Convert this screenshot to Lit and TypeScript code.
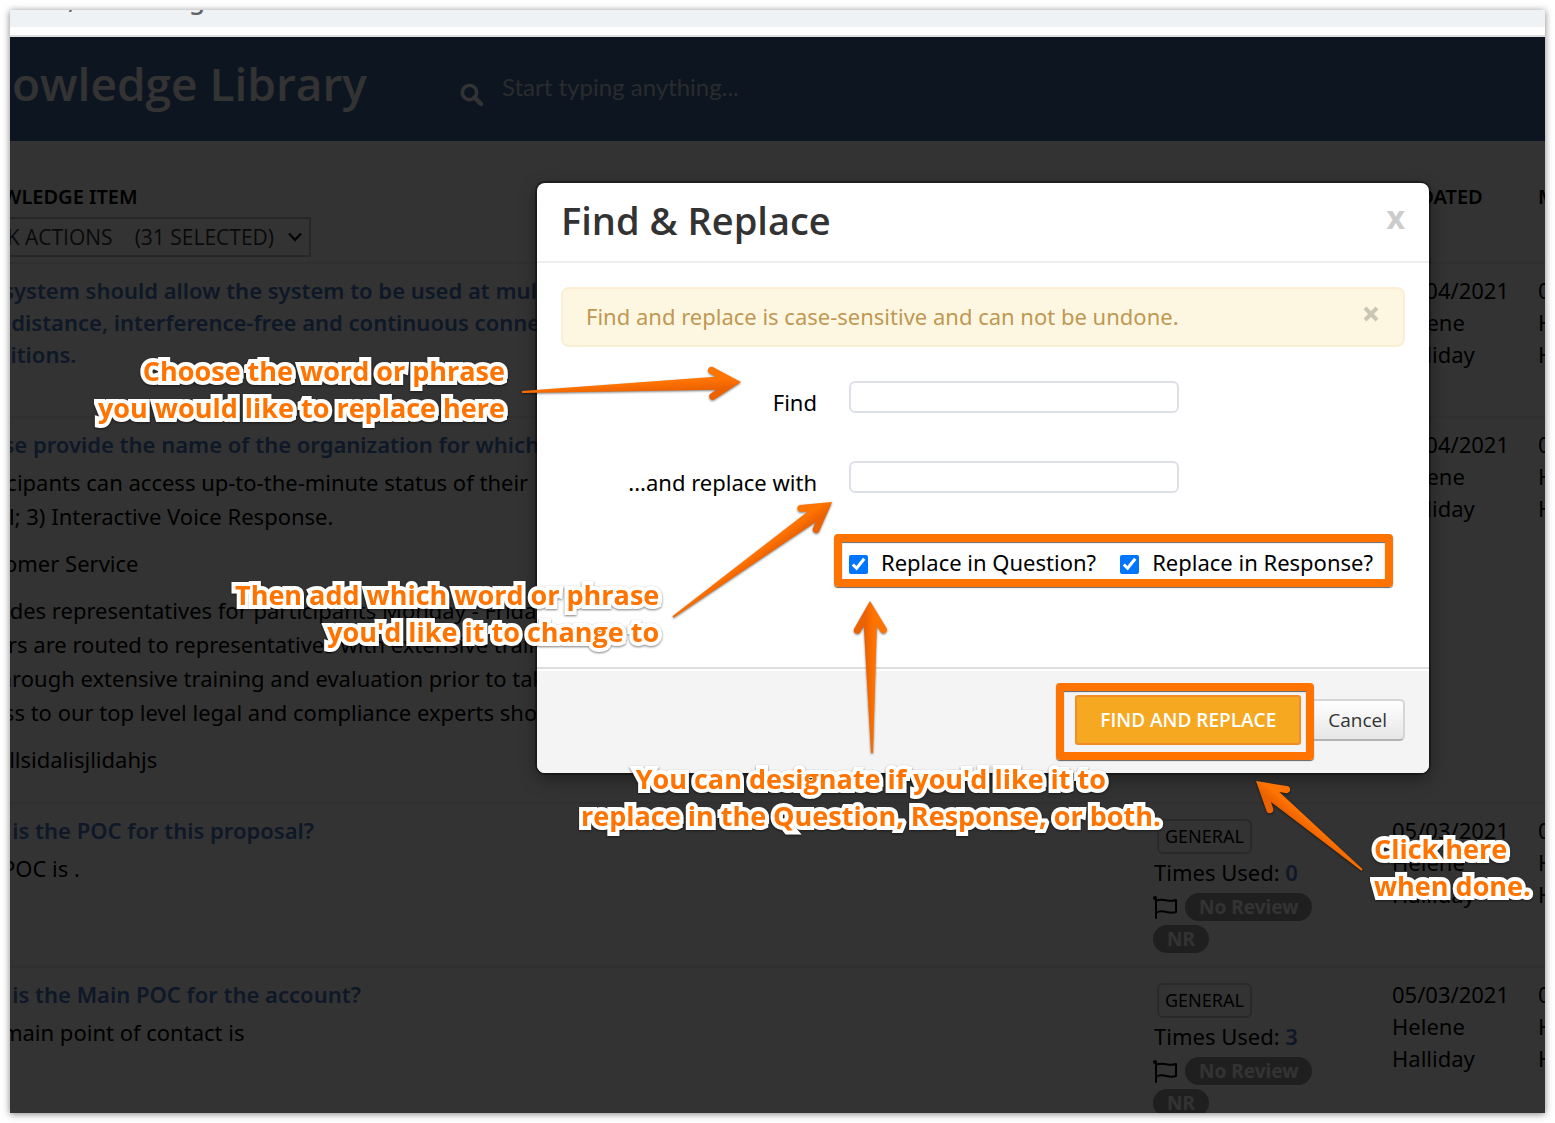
import { LitElement, css, html, svg, nothing } from "lit";
import { customElement, state } from "lit/decorators.js";

interface Item {
  size: string;
  title: string[];
  paragraphs: string[][];
  uses: number | null;
  date: string;
}

interface Arrow {
  tail: [number, number];
  tip: [number, number];
  shade: "left" | "right";
}

const ITEMS: Item[] = [
  {
    size: "short",
    title: [
      "The system should allow the system to be used at multiple",
      "long distance, interference-free and continuous connection",
      "conditions.",
    ],
    paragraphs: [],
    uses: null,
    date: "05/04/2021",
  },
  {
    size: "tall",
    title: ["Please provide the name of the organization for which"],
    paragraphs: [
      ["Participants can access up-to-the-minute status of their", "email; 3) Interactive Voice Response."],
      ["Customer Service"],
      [
        "Provides representatives for participants Monday - Friday",
        "Callers are routed to representatives with extensive training",
        "go through extensive training and evaluation prior to taking",
        "access to our top level legal and compliance experts should",
      ],
      ["rldsallsidalisjlidahjs"],
    ],
    uses: null,
    date: "05/04/2021",
  },
  {
    size: "medium",
    title: ["Who is the POC for this proposal?"],
    paragraphs: [["The POC is ."]],
    uses: 0,
    date: "05/03/2021",
  },
  {
    size: "medium",
    title: ["Who is the Main POC for the account?"],
    paragraphs: [["The main point of contact is"]],
    uses: 3,
    date: "05/03/2021",
  },
];

const ARROWS: Arrow[] = [
  { tail: [512, 382], tip: [731, 372], shade: "right" },
  { tail: [663, 607], tip: [822, 492], shade: "right" },
  { tail: [862, 743], tip: [860, 591], shade: "left" },
  { tail: [1352, 860], tip: [1246, 771], shade: "left" },
];

@customElement("library-page")
class LibraryPage extends LitElement {
  static styles = css`
    :host {
      display: block;
      color: #000;
      background: #fff;
      font: 22px/32px "Noto Sans", "Open Sans", sans-serif;
    }
    .strip {
      height: 17px;
      overflow: hidden;
      background: #eef2f4;
      color: #5f6368;
      display: flex;
      gap: 114px;
      padding-left: 58px;
      font-size: 26px;
      font-weight: 500;
      line-height: 1px;
      box-sizing: border-box;
    }
    .strip span {
      margin-top: -11px;
    }
    .toolbar {
      height: 8px;
      border-bottom: 2px solid #dcdee0;
    }
    .header {
      height: 104px;
      display: flex;
      align-items: center;
      background: #41699f;
      color: #fff;
    }
    .heading {
      margin: 0 0 12px -60px;
      width: 417px;
      box-sizing: border-box;
      display: flex;
      justify-content: flex-end;
      font-family: "Open Sans", "Noto Sans", sans-serif;
      font-size: 46px;
      line-height: 60px;
      font-weight: 600;
      white-space: nowrap;
    }
    .search {
      display: flex;
      align-items: center;
      gap: 19px;
      margin-left: 93px;
    }
    .search svg {
      margin-top: 10px;
    }
    .query {
      border: 0;
      padding: 0;
      width: 400px;
      margin-bottom: 4px;
      background: none;
      color: #fff;
      font: 24px/32px Lato, "Noto Sans", sans-serif;
    }
    .query::placeholder {
      color: #cfd6e0;
      opacity: 1;
    }
    .items {
      width: 1700px;
      margin-left: -64px;
      table-layout: fixed;
      border-collapse: collapse;
    }
    .c-item {
      width: 1196px;
    }
    .c-info {
      width: 238px;
    }
    .c-updated {
      width: 146px;
    }
    th,
    td {
      padding: 10px 12px 0;
      text-align: left;
      vertical-align: top;
      border-bottom: 2px solid #eee;
      box-sizing: border-box;
      white-space: nowrap;
    }
    th {
      height: 122px;
      padding-top: 40px;
      font-size: 20px;
      font-weight: 600;
    }
    .bulk {
      display: flex;
      align-items: center;
      justify-content: flex-end;
      gap: 22px;
      width: 353px;
      height: 40px;
      margin: 4px 0 0;
      padding: 0 7px;
      border: 2px solid #c4c4c4;
      background: none;
      color: #333;
      font: 500 21px/32px "Open Sans", "Noto Sans", sans-serif;
    }
    .count {
      display: flex;
      align-items: center;
      gap: 14px;
    }
    .short {
      height: 154px;
    }
    .tall {
      height: 386px;
    }
    .medium {
      height: 164px;
    }
    .link {
      display: block;
      color: #4678be;
      font-weight: 600;
      text-decoration: none;
    }
    .response {
      margin: 5px 0 -5px;
      line-height: 34px;
      padding-bottom: 13px;
    }
    .response + .response {
      margin-top: 5px;
    }
    .tag {
      display: block;
      width: fit-content;
      margin: 5px 0 2px 3px;
      padding: 0 6px;
      border: 2px solid #ccd;
      border-radius: 6px;
      font-size: 18px;
      line-height: 31px;
    }
    .uses {
      color: #4678be;
      font-weight: 600;
    }
    .review {
      display: flex;
      flex-wrap: wrap;
      align-items: center;
      gap: 4px 8px;
      margin: 5px 0 0 -1px;
    }
    .pill {
      border-radius: 14px;
      padding: 0 14px;
      background: #999;
      color: #fff;
      font-size: 19px;
      font-weight: 700;
      line-height: 28px;
    }
  `;

  private info(uses: number) {
    return html`
      <span class="tag">GENERAL</span>
      <div>Times Used: <span class="uses">${uses}</span></div>
      <div class="review">
        <svg width="24" height="24" viewBox="0 0 24 24" fill="none" stroke="#000" stroke-width="2" stroke-linejoin="round" stroke-linecap="round" aria-hidden="true">
          <circle cx="2" cy="3" r="1" fill="#000" />
          <path d="M3 3V23M3 6C10 2 15 8 23 5V17C15 20 10 13 3 18" />
        </svg>
        <span class="pill">No Review</span>
        <span class="pill">NR</span>
      </div>
    `;
  }

  render() {
    return html`
      <div class="strip"><span>,</span><span>g</span></div>
      <div class="toolbar"></div>
      <header class="header">
        <h1 class="heading">Knowledge Library</h1>
        <label class="search">
          <svg width="23" height="23" viewBox="0 0 23 23" fill="none" stroke="#fff" stroke-width="3.500" aria-hidden="true">
            <circle cx="9.500" cy="9.500" r="7.200" />
            <path d="M14.500 14.500L21 21" stroke-width="4.500" stroke-linecap="round" />
          </svg>
          <input class="query" type="search" aria-label="Search" placeholder="Start typing anything..." />
        </label>
      </header>
      <table class="items">
        <colgroup>
          <col class="c-item" /><col class="c-info" /><col class="c-updated" /><col />
        </colgroup>
        <thead>
          <tr>
            <th>
              KNOWLEDGE ITEM
              <button class="bulk" type="button">
                <span>BULK ACTIONS</span>
                <span class="count">(31 SELECTED)
                  <svg width="14" height="10" viewBox="0 0 14 10" fill="none" stroke="#222" stroke-width="2.500" aria-hidden="true"><path d="M1 1.500L7 8L13 1.500" /></svg>
                </span>
              </button>
            </th>
            <th></th>
            <th>UPDATED</th>
            <th>MODIFIED</th>
          </tr>
        </thead>
        <tbody>
          ${ITEMS.map(
            (item) => html`
              <tr class=${item.size}>
                <td>
                  <a class="link" href="#">${item.title.map((line, i) => html`${i ? html`<br />` : nothing}${line}`)}</a>
                  ${item.paragraphs.map(
                    (lines) => html`<p class="response">${lines.map((line, i) => html`${i ? html`<br />` : nothing}${line}`)}</p>`,
                  )}
                </td>
                <td>${item.uses === null ? nothing : this.info(item.uses)}</td>
                <td>${item.date}<br />Helene<br />Halliday</td>
                <td>${item.date}<br />Helene<br />Halliday</td>
              </tr>
            `,
          )}
        </tbody>
      </table>
    `;
  }
}

@customElement("replace-dialog")
class ReplaceDialog extends LitElement {
  @state() private warning = true;

  static styles = css`
    :host {
      display: block;
      border-radius: 8px;
      background: #fff;
      box-shadow: 0 0 0 2px rgba(0, 0, 0, 0.35), 0 6px 18px rgba(0, 0, 0, 0.4);
      color: #000;
      font: 22px/32px "Noto Sans", "Open Sans", sans-serif;
    }
    .head {
      display: flex;
      align-items: center;
      justify-content: space-between;
      height: 80px;
      padding: 0 24px 4px;
      box-sizing: border-box;
      border-bottom: 2px solid #eee;
    }
    .title {
      margin: 0;
      color: #333;
      font-family: "Open Sans", "Noto Sans", sans-serif;
      font-size: 38px;
      line-height: 52px;
      font-weight: 600;
    }
    .close {
      border: 0;
      padding: 0;
      background: none;
      color: #ccc;
      font: 700 32px/32px "Noto Sans", "Open Sans", sans-serif;
      margin-bottom: 6px;
    }
    .body {
      height: 404px;
      box-sizing: border-box;
      padding: 24px;
    }
    .alert {
      display: flex;
      justify-content: space-between;
      align-items: center;
      height: 60px;
      box-sizing: border-box;
      padding: 0 23px 2px;
      border: 2px solid #fbeed5;
      border-radius: 8px;
      background: #fdf7e2;
      color: #c09853;
    }
    .dismiss {
      border: 0;
      padding: 0;
      background: none;
      line-height: 0;
      margin-bottom: 4px;
    }
    .form {
      display: grid;
      grid-template-columns: 256px 1fr;
      column-gap: 32px;
      margin-top: 34px;
    }
    .form label {
      height: 80px;
      padding-top: 5px;
      box-sizing: border-box;
      text-align: right;
    }
    .field {
      width: 330px;
      height: 32px;
      box-sizing: border-box;
      border: 2px solid #dde1e7;
      border-radius: 6px;
      padding: 0 8px;
      font: inherit;
    }
    .checks {
      grid-column: 2;
      display: flex;
      gap: 24px;
      padding-top: 5px;
    }
    .form .check {
      display: flex;
      align-items: center;
      gap: 13px;
      height: 32px;
      padding: 0;
      white-space: nowrap;
    }
    .box {
      width: 19px;
      height: 19px;
      margin: 4px 0 0;
      accent-color: #0075ff;
    }
    .foot {
      display: flex;
      align-items: center;
      justify-content: flex-end;
      gap: 9px;
      height: 106px;
      box-sizing: border-box;
      padding: 0 24px 2px;
      border-top: 2px solid #ddd;
      border-radius: 0 0 8px 8px;
      background: #f4f4f4;
      box-shadow: inset 0 2px 0 #fff;
    }
    .btn {
      box-sizing: border-box;
      font: 19px/26px "Open Sans", "Noto Sans", sans-serif;
    }
    .primary {
      height: 50px;
      padding: 0 23px;
      border: 2px solid #f28c28;
      border-radius: 3px;
      background: #f6a821;
      color: #fff;
      font-weight: 600;
    }
    .cancel {
      height: 42px;
      padding: 0 16px;
      border: 2px solid #d6d6d6;
      border-bottom-color: #b3b3b3;
      border-radius: 5px;
      background: linear-gradient(#fff, #e6e6e6);
      color: #333;
    }
  `;

  render() {
    return html`
      <div class="head">
        <h2 class="title">Find &amp; Replace</h2>
        <button class="close" type="button" aria-label="Close">x</button>
      </div>
      <div class="body">
        ${this.warning
          ? html`<div class="alert">
              <span>Find and replace is case-sensitive and can not be undone.</span>
              <button class="dismiss" type="button" aria-label="Dismiss" @click=${() => (this.warning = false)}>
                <svg width="18" height="18" viewBox="0 0 18 18" stroke="#c9c6b6" stroke-width="4"><path d="M3 3L15 15M15 3L3 15" /></svg>
              </button>
            </div>`
          : nothing}
        <form class="form">
          <label for="find">Find</label>
          <input class="field" id="find" type="text" />
          <label for="with">...and replace with</label>
          <input class="field" id="with" type="text" />
          <div class="checks">
            <label class="check"><input class="box" type="checkbox" checked />Replace in Question?</label>
            <label class="check"><input class="box" type="checkbox" checked />Replace in Response?</label>
          </div>
        </form>
      </div>
      <div class="foot">
        <button class="btn primary" type="button">FIND AND REPLACE</button>
        <button class="btn cancel" type="button">Cancel</button>
      </div>
    `;
  }
}

@customElement("app-root")
class AppRoot extends LitElement {
  static styles = css`
    :host {
      display: block;
      height: 100vh;
      box-sizing: border-box;
      padding: 10px;
      background: #fff;
    }
    .frame {
      position: relative;
      height: 100%;
      overflow: hidden;
    }
    .shadow {
      height: 100%;
      box-shadow: 0 1px 7px rgba(0, 0, 0, 0.5);
    }
    .backdrop {
      position: absolute;
      inset: 27px 0 0;
      background: rgba(0, 0, 0, 0.8);
      padding: 146px 0 0 527px;
    }
    .dialog {
      max-width: 892px;
    }
    .marks {
      position: absolute;
      inset: 0;
      pointer-events: none;
    }
    .arrows {
      position: absolute;
      inset: 0;
      width: 100%;
      height: 100%;
      filter: drop-shadow(0 1px 1px rgba(0, 0, 0, 0.5));
    }
    .note {
      position: absolute;
      margin: 0;
      color: #ff7300;
      font: 700 27px/37px "Open Sans", "Noto Sans", sans-serif;
      white-space: nowrap;
      -webkit-text-stroke: 8px #fff;
      paint-order: stroke fill;
      stroke-linejoin: round;
      filter: drop-shadow(0 1px 1px rgba(0, 0, 0, 0.5));
    }
    .n1 {
      left: 88px;
      top: 342px;
      text-align: right;
    }
    .n2 {
      left: 225px;
      top: 566px;
      text-align: right;
    }
    .n3 {
      left: 571px;
      top: 750px;
      text-align: center;
    }
    .n4 {
      left: 1364px;
      top: 820px;
    }
    .ring {
      position: absolute;
      box-sizing: border-box;
      border: 8px solid #ff7300;
      border-radius: 4px;
      box-shadow: 0 1px 1px rgba(0, 0, 0, 0.6), inset 0 1px 1px rgba(0, 0, 0, 0.6);
    }
    .r1 {
      left: 824px;
      top: 524px;
      width: 559px;
      height: 53px;
    }
    .r2 {
      left: 1046px;
      top: 673px;
      width: 258px;
      height: 77px;
    }
  `;

  private arrow(a: Arrow) {
    const dx = a.tip[0] - a.tail[0];
    const dy = a.tip[1] - a.tail[1];
    const angle = (Math.atan2(dy, dx) * 180) / Math.PI;
    const length = Math.hypot(dx, dy);
    const flip = a.shade === "right" ? 1 : -1;
    // The tip is the origin; the shaft runs back along negative x.
    return svg`
      <g transform="translate(${a.tip[0]} ${a.tip[1]}) rotate(${angle}) scale(1 ${flip})">
        <path fill="url(#tone)" d="M${-length} -1L-25 -6.500L-31.500 -10.500A3.600 3.600 0 0 1 -28 -16.500L0 0L-28 16.500A3.600 3.600 0 0 1 -31.500 10.500L-25 6.500L${-length} 1Z" />
      </g>`;
  }

  render() {
    return html`
      <div class="shadow">
        <div class="frame">
          <library-page></library-page>
          <div class="backdrop"><replace-dialog class="dialog" role="dialog" aria-label="Find and replace"></replace-dialog></div>
          <div class="marks">
            <div class="ring r1"></div>
            <div class="ring r2"></div>
            <svg class="arrows" aria-hidden="true">
              <defs>
                <linearGradient id="tone" gradientUnits="userSpaceOnUse" x1="0" y1="-17" x2="0" y2="17">
                  <stop offset="0.400" stop-color="#ff7300" />
                  <stop offset="0.650" stop-color="#ec6200" />
                </linearGradient>
              </defs>
              ${ARROWS.map((a) => this.arrow(a))}
            </svg>
            <p class="note n1">Choose the word or phrase<br />you would like to replace here</p>
            <p class="note n2">Then add which word or phrase<br />you'd like it to change to</p>
            <p class="note n3">You can designate if you'd like it to<br />replace in the Question, Response, or both.</p>
            <p class="note n4">Click here<br />when done.</p>
          </div>
        </div>
      </div>
    `;
  }
}
